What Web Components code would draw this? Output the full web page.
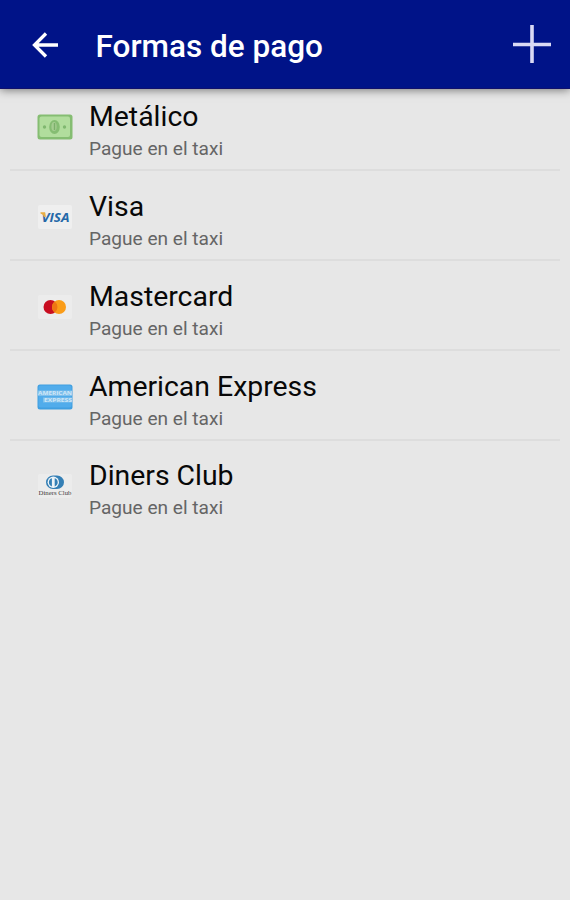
<!DOCTYPE html>
<html lang="es">
<head>
<meta charset="UTF-8">
<meta name="viewport" content="width=device-width, initial-scale=1.0">
<title>Formas de pago</title>
<style>
    body {
        margin: 0;
        min-height: 100vh;
        background: #e7e7e7;
        font-family: Roboto, "Liberation Sans", sans-serif;
    }
</style>
</head>
<body>
<payment-screen></payment-screen>

<script>
// Icons, all on the same 36x26 canvas
const icons = {
    cash: `
        <rect x=".5" y=".5" width="35" height="25" rx="2.5" fill="#85bd72"/>
        <rect x="2.5" y="2.5" width="30.5" height="20.5" rx="2" fill="#b1dd9d"/>
        <ellipse cx="17.5" cy="13" rx="5.3" ry="7" fill="#85bd72"/>
        <ellipse cx="17" cy="12.5" rx="2.6" ry="4.6" fill="#a5cd91"/>
        <path d="M17.5 9v7" stroke="#7caf6b" stroke-width="1.4"/>
        <circle cx="7.5" cy="13" r="1.7" fill="#80b870"/>
        <circle cx="27.5" cy="13" r="1.7" fill="#80b870"/>`,
    visa: `
        <rect x="1" y="1" width="34" height="24" rx="2" fill="#efefef"/>
        <text x="4.5" y="17.8" font-size="12.3" font-weight="700" font-style="italic" fill="#2568a8" textLength="28" lengthAdjust="spacingAndGlyphs">VISA</text>
        <path d="M3.5 8.3h4.6l.7 4.7H7Q6.5 10.300 3.5 9.500z" fill="#e9ad42"/>`,
    mastercard: `
        <rect x="1" y="1" width="34" height="24" rx="2" fill="#ececec"/>
        <circle cx="13.5" cy="13" r="7" fill="#c80d20"/>
        <circle cx="22" cy="13" r="7" fill="#fa9c18"/>
        <path d="M17.75 7.44a7 7 0 0 1 0 11.12a7 7 0 0 1 0-11.12z" fill="#ee7514"/>`,
    amex: `
        <rect x=".5" y=".5" width="35" height="25" rx="2.5" fill="#409fe0"/>
        <rect x="1.5" y="1.5" width="33" height="22" rx="2" fill="#51aceb"/>
        <rect x="1" y="6.5" width="34" height="5.5" fill="#80c0ec"/>
        <rect x="6" y="13.5" width="29" height="5" fill="#80c0ec"/>
        <text x="1" y="11.3" font-size="5.5" font-weight="700" fill="#cfe7f7" textLength="34" lengthAdjust="spacingAndGlyphs">AMERICAN</text>
        <text x="7" y="18" font-size="5.5" font-weight="700" fill="#cfe7f7" textLength="28" lengthAdjust="spacingAndGlyphs">EXPRESS</text>`,
    diners: `
        <rect x="1" y="1" width="34" height="24" rx="2" fill="#ececec"/>
        <path d="M16 2.5h4a7 6.8 0 0 1 0 13.6h-4a7 6.8 0 0 1 0-13.6z" fill="#347fb5"/>
        <circle cx="16.3" cy="9.3" r="5.7" fill="#edf4f8"/>
        <path d="M14.9 5.2a4.3 4.3 0 0 0 0 8.2zM17.7 5.2a4.3 4.3 0 0 1 0 8.2z" fill="#347fb5"/>
        <text x="1.5" y="22.3" font-family="Liberation Serif, serif" font-size="7" fill="#3c3c3c" textLength="33" lengthAdjust="spacingAndGlyphs">Diners Club</text>`
};

class AppBar extends HTMLElement {
    constructor() {
        super();
        this.attachShadow({ mode: 'open' });
        this.shadowRoot.innerHTML = `
            <style>
                :host {
                    display: flex;
                    align-items: center;
                    box-sizing: border-box;
                    height: 89px;
                    padding: 0 19px 0 31px;
                    background: #001388;
                    border-bottom: 1px solid #10106c;
                    box-shadow: 0 1px 9px rgba(0, 0, 0, 0.5);
                    color: #fff;
                }
                h1 {
                    flex: 1;
                    margin: 6px 0 0 36.5px;
                    font-size: 31.5px;
                    line-height: 40px;
                    font-weight: 500;
                    white-space: nowrap;
                }
                svg {
                    display: block;
                    fill: none;
                }
                .back {
                    margin-top: 1px;
                }
            </style>
            <svg class="back" width="28" height="28" viewBox="0 0 28 28" stroke="#fff" stroke-width="3.3">
                <path d="M27 14H3.5M15 2.5L3.5 14L15 25.5"/>
            </svg>
            <h1><slot></slot></h1>
            <svg width="38" height="38" viewBox="0 0 38 38" stroke="#d9d9f4" stroke-width="3.6">
                <path d="M0 19.5H38M19 0V38"/>
            </svg>
        `;
    }
}

customElements.define('app-bar', AppBar);

class PaymentMethod extends HTMLElement {
    constructor() {
        super();
        this.attachShadow({ mode: 'open' });
    }

    connectedCallback() {
        this.shadowRoot.innerHTML = `
            <style>
                :host {
                    display: flex;
                    align-items: flex-end;
                    box-sizing: border-box;
                    height: 89.8px;
                    margin: 0 10px;
                    padding: 0 0 7px 26px;
                    border-bottom: 2px solid #dddddd;
                }
                :host(:first-of-type) {
                    height: 82.2px;
                }
                :host(:last-of-type) {
                    border-color: transparent;
                }
                svg {
                    flex: none;
                    margin: 0 16.5px 21.9px 0.5px;
                    overflow: visible;
                    font-family: "Open Sans", sans-serif;
                }
                .name {
                    font-size: 28.4px;
                    line-height: 37px;
                    margin-bottom: 1px;
                    color: #080808;
                }
                .note {
                    font-size: 19.1px;
                    line-height: 26px;
                    color: #656565;
                }
            </style>
            <svg width="36" height="26" viewBox="0 0 36 26">${icons[this.getAttribute('icon')]}</svg>
            <div>
                <div class="name"><slot></slot></div>
                <div class="note"><slot name="note"></slot></div>
            </div>
        `;
    }
}

customElements.define('payment-method', PaymentMethod);

const methods = [
    ['cash', 'Metálico'],
    ['visa', 'Visa'],
    ['mastercard', 'Mastercard'],
    ['amex', 'American Express'],
    ['diners', 'Diners Club']
];

class PaymentScreen extends HTMLElement {
    constructor() {
        super();
        this.attachShadow({ mode: 'open' });
        this.shadowRoot.innerHTML = `
            <style>
                :host {
                    display: block;
                }
            </style>
            <app-bar>Formas de pago</app-bar>
            <main>
                ${methods.map(([icon, name]) => `
                    <payment-method icon="${icon}">${name}<span slot="note">Pague en el taxi</span></payment-method>
                `).join('')}
            </main>
        `;
    }
}

customElements.define('payment-screen', PaymentScreen);
</script>
</body>
</html>
